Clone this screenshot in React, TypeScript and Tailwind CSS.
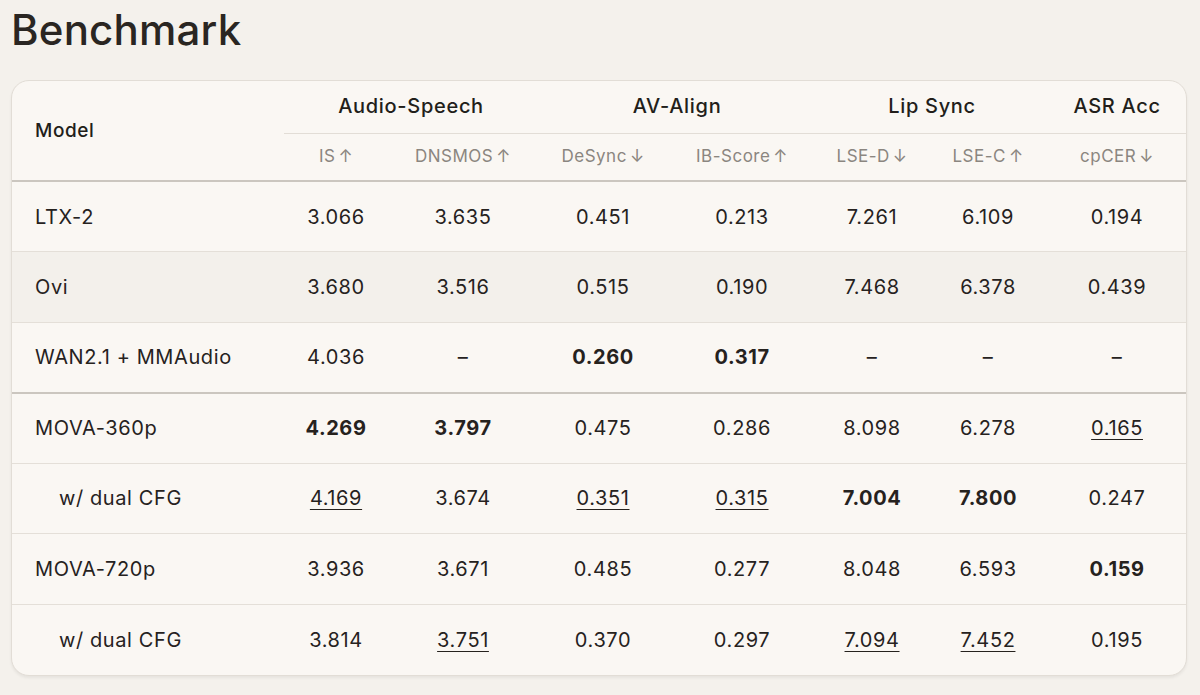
const groups = [
  { name: "Audio-Speech", span: 2 },
  { name: "AV-Align", span: 2 },
  { name: "Lip Sync", span: 2 },
  { name: "ASR Acc", span: 1 },
];

const metrics = [
  { name: "IS", up: true },
  { name: "DNSMOS", up: true },
  { name: "DeSync", up: false },
  { name: "IB-Score", up: true },
  { name: "LSE-D", up: false },
  { name: "LSE-C", up: true },
  { name: "cpCER", up: false },
];

// b = bold (best), u = underline (second)
type Cell = { v: string; b?: boolean; u?: boolean };

const rows: { model: string; sub?: boolean; hover?: boolean; split?: boolean; cells: Cell[] }[] = [
  {
    model: "LTX-2",
    cells: [{ v: "3.066" }, { v: "3.635" }, { v: "0.451" }, { v: "0.213" }, { v: "7.261" }, { v: "6.109" }, { v: "0.194" }],
  },
  {
    model: "Ovi",
    hover: true,
    cells: [{ v: "3.680" }, { v: "3.516" }, { v: "0.515" }, { v: "0.190" }, { v: "7.468" }, { v: "6.378" }, { v: "0.439" }],
  },
  {
    model: "WAN2.1 + MMAudio",
    split: true,
    cells: [{ v: "4.036" }, { v: "–" }, { v: "0.260", b: true }, { v: "0.317", b: true }, { v: "–" }, { v: "–" }, { v: "–" }],
  },
  {
    model: "MOVA-360p",
    cells: [
      { v: "4.269", b: true },
      { v: "3.797", b: true },
      { v: "0.475" },
      { v: "0.286" },
      { v: "8.098" },
      { v: "6.278" },
      { v: "0.165", u: true },
    ],
  },
  {
    model: "w/ dual CFG",
    sub: true,
    cells: [
      { v: "4.169", u: true },
      { v: "3.674" },
      { v: "0.351", u: true },
      { v: "0.315", u: true },
      { v: "7.004", b: true },
      { v: "7.800", b: true },
      { v: "0.247" },
    ],
  },
  {
    model: "MOVA-720p",
    cells: [{ v: "3.936" }, { v: "3.671" }, { v: "0.485" }, { v: "0.277" }, { v: "8.048" }, { v: "6.593" }, { v: "0.159", b: true }],
  },
  {
    model: "w/ dual CFG",
    sub: true,
    cells: [
      { v: "3.814" },
      { v: "3.751", u: true },
      { v: "0.370" },
      { v: "0.297" },
      { v: "7.094", u: true },
      { v: "7.452", u: true },
      { v: "0.195" },
    ],
  },
];

export default function App() {
  return (
    <div
      className="min-h-[695px] w-[1200px] bg-[#f4f1ec] text-[#26221e]"
      style={{ fontFamily: "Inter, 'Noto Sans', sans-serif" }}
    >
      <h1 className="pl-[11px] pt-[8px] text-[42px] font-medium leading-[44px] tracking-[0.2px] text-[#2a2622]">
        Benchmark
      </h1>

      <div className="ml-[11px] mt-[28px] w-[1176px] overflow-hidden rounded-[18px] border border-[#e2ddd6] bg-[#faf7f3] shadow-[0_2px_3px_rgba(0,0,0,0.06)]">
        <table className="w-full table-fixed border-collapse">
          <colgroup>
            <col className="w-[272px]" />
            <col className="w-[104px]" />
            <col className="w-[150px]" />
            <col className="w-[130px]" />
            <col className="w-[148px]" />
            <col className="w-[112px]" />
            <col className="w-[120px]" />
            <col className="w-[138px]" />
          </colgroup>
          <thead>
            <tr className="h-[52px]">
              <th
                rowSpan={2}
                className="border-b-2 border-[#cbc6bf] pl-[23px] pt-[1px] text-left text-[19px] font-medium tracking-[0.6px] text-[#221e1a]"
              >
                Model
              </th>
              {groups.map((g) => (
                <th
                  key={g.name}
                  colSpan={g.span}
                  className="border-b border-[#e2ddd6] pb-[2px] text-center text-[20px] font-medium tracking-[0.7px] text-[#221e1a]"
                >
                  {g.name}
                </th>
              ))}
            </tr>
            <tr className="h-[48px]">
              {metrics.map((m) => (
                <th
                  key={m.name}
                  className="border-b-2 border-[#cbc6bf] text-center text-[17px] font-normal tracking-[0.5px] text-[#8b8680]"
                >
                  {m.name}
                  <span className="ml-[3px] text-[17px]">{m.up ? "↑" : "↓"}</span>
                </th>
              ))}
            </tr>
          </thead>
          <tbody>
            {rows.map((r, i) => (
              <tr
                key={i}
                className={
                  "h-[70.5px] " +
                  (i === rows.length - 1
                    ? ""
                    : r.split
                      ? "border-b-2 border-[#cbc6bf] "
                      : "border-b border-[#e4dfd8] ") +
                  (r.hover ? "bg-[#f3f0eb]" : "")
                }
              >
                <td
                  className={
                    "text-[20px] tracking-[0.6px] text-[#26221e] " + (r.sub ? "pl-[47px]" : "pl-[23px]")
                  }
                >
                  {r.model}
                </td>
                {r.cells.map((c, j) => (
                  <td
                    key={j}
                    className={
                      "text-center text-[20px] tracking-[0.6px] text-[#26221e] " +
                      (c.b ? "font-bold " : "") +
                      (c.u ? "underline decoration-1 underline-offset-[4px]" : "")
                    }
                  >
                    {c.v}
                  </td>
                ))}
              </tr>
            ))}
          </tbody>
        </table>
      </div>
    </div>
  );
}
